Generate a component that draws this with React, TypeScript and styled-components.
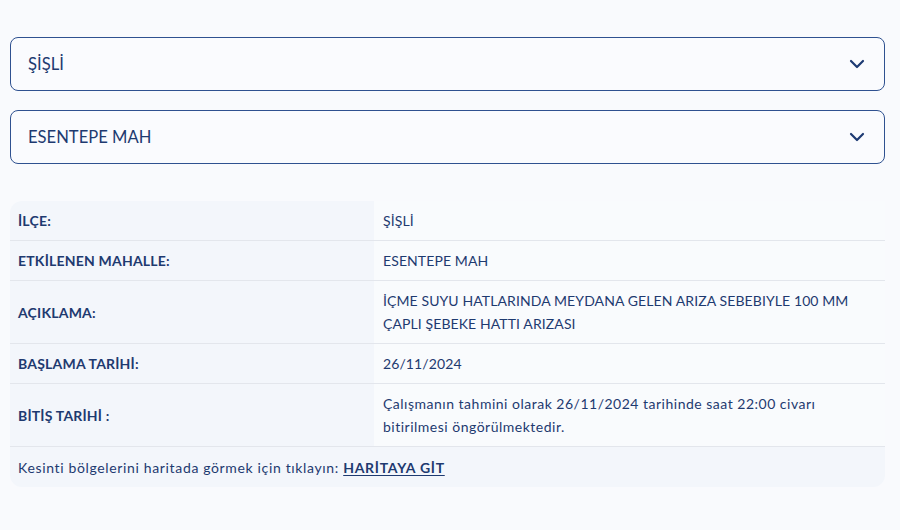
import styled, { createGlobalStyle } from "styled-components";

interface IRow {
  label: string;
  value: string;
  tall?: boolean;
  lower?: boolean;
}

const rows: IRow[] = [
  { label: "İLÇE:", value: "ŞİŞLİ" },
  { label: "ETKİLENEN MAHALLE:", value: "ESENTEPE MAH" },
  {
    label: "AÇIKLAMA:",
    value: "İÇME SUYU HATLARINDA MEYDANA GELEN ARIZA SEBEBIYLE 100 MM ÇAPLI ŞEBEKE HATTI ARIZASI",
    tall: true,
  },
  { label: "BAŞLAMA TARİHİ:", value: "26/11/2024" },
  {
    label: "BİTİŞ TARİHİ :",
    value: "Çalışmanın tahmini olarak 26/11/2024 tarihinde saat 22:00 civarı bitirilmesi öngörülmektedir.",
    tall: true,
    lower: true,
  },
];

const Chevron = () => (
  <svg width="16" height="10" viewBox="0 0 16 10" fill="none">
    <path d="M2 2l6 6 6-6" stroke="#1d3a73" strokeWidth="2.2" strokeLinecap="round" strokeLinejoin="round" />
  </svg>
);

export default function App() {
  return (
    <>
      <GlobalStyle />
      <Page>
        <Select>
          <span>ŞİŞLİ</span>
          <Chevron />
        </Select>
        <Select>
          <span>ESENTEPE MAH</span>
          <Chevron />
        </Select>
        <InfoTable>
          {rows.map((r) => (
            <Row key={r.label} $tall={r.tall}>
              <Label>{r.label}</Label>
              <Value $lower={r.lower}>{r.value}</Value>
            </Row>
          ))}
          <Footer>
            Kesinti bölgelerini haritada görmek için tıklayın: <MapLink href="#">HARİTAYA GİT</MapLink>
          </Footer>
        </InfoTable>
      </Page>
    </>
  );
}

const GlobalStyle = createGlobalStyle`
  body {
    margin: 0;
    background: #f9fafd;
    font-family: "Lato", "Noto Sans", sans-serif;
    color: #1e3a70;
  }
`;

const Page = styled.div`
  width: 875px;
  padding: 37px 15px 0 10px;
  display: flex;
  flex-direction: column;
`;

const Select = styled.div`
  height: 54px;
  box-sizing: border-box;
  border: 1px solid #2f5190;
  border-radius: 8px;
  display: flex;
  align-items: center;
  justify-content: space-between;
  padding: 0 19px 0 17px;
  margin-bottom: 19px;
  font-size: 16.6px;
  color: #1e3a70;
  background: #fafbfe;
`;

const InfoTable = styled.div`
  margin-top: 18px;
  border-radius: 12px 0 12px 12px;
  overflow: hidden;
  font-size: 14px;
`;

const Row = styled.div<{ $tall?: boolean }>`
  display: grid;
  grid-template-columns: 364px 1fr;
  box-sizing: border-box;
  height: ${(p) => (p.$tall ? "63px" : "40px")};
  border-bottom: 1px solid #e3e6ec;
`;

const Label = styled.div`
  background: #f3f6fb;
  display: flex;
  align-items: center;
  padding: 0 8px;
  font-weight: 700;
  letter-spacing: 0.2px;
  color: #1e3a70;
`;

const Value = styled.div<{ $lower?: boolean }>`
  background: #f9fbfd;
  display: flex;
  align-items: center;
  padding: 0 30px 0 9px;
  line-height: 23px;
  letter-spacing: ${(p) => (p.$lower ? "0.5px" : "0.1px")};
  color: #1e3a70;
`;

const Footer = styled.div`
  background: #f3f6fb;
  height: 40px;
  display: flex;
  align-items: center;
  padding: 0 8px;
  white-space: pre;
  letter-spacing: 0.65px;
`;

const MapLink = styled.a`
  font-weight: 700;
  letter-spacing: 0.7px;
  color: #1e3a70;
  text-decoration: underline;
  text-underline-offset: 2px;
`;
